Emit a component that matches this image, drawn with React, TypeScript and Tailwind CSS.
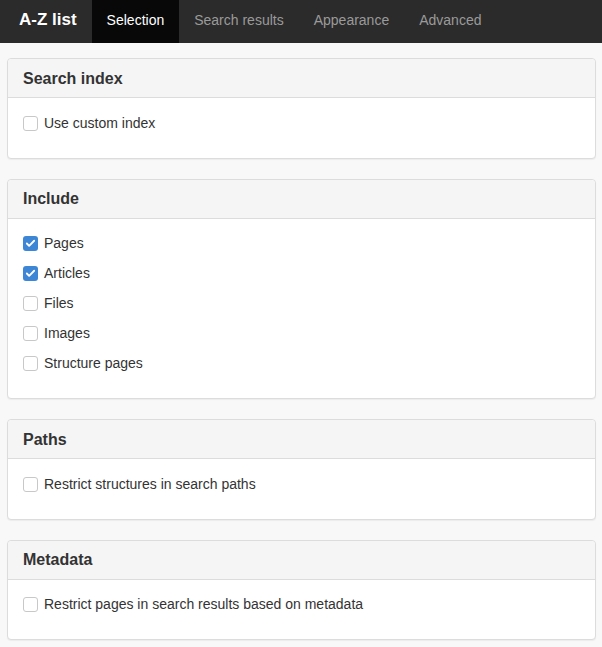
import { Check } from 'lucide-react'

type Option = { label: string; checked?: boolean }

const sections: { title: string; options: Option[] }[] = [
  { title: 'Search index', options: [{ label: 'Use custom index' }] },
  {
    title: 'Include',
    options: [
      { label: 'Pages', checked: true },
      { label: 'Articles', checked: true },
      { label: 'Files' },
      { label: 'Images' },
      { label: 'Structure pages' },
    ],
  },
  { title: 'Paths', options: [{ label: 'Restrict structures in search paths' }] },
  { title: 'Metadata', options: [{ label: 'Restrict pages in search results based on metadata' }] },
]

const tabs = ['Selection', 'Search results', 'Appearance', 'Advanced']

function CheckBox({ checked }: { checked?: boolean }) {
  if (checked) {
    return (
      <span className="flex items-center justify-center w-[15px] h-[15px] rounded-[3px] bg-[#3d86d6]">
        <Check size={11} strokeWidth={4} className="text-white" />
      </span>
    )
  }
  return <span className="w-[15px] h-[15px] rounded-[3px] border border-[#c8c8c8] bg-white" />
}

function Panel({ title, options }: { title: string; options: Option[] }) {
  return (
    <section className="border border-[#dcdcdc] rounded-[4px] bg-white shadow-[0_1px_1px_rgba(0,0,0,0.05)]">
      <header className="h-[39px] flex items-center px-[15px] pt-[1px] bg-[#f5f5f5] border-b border-[#dcdcdc] rounded-t-[4px]">
        <h2 className="text-[16px] font-bold text-[#333]">{title}</h2>
      </header>
      <div className="px-[15px] pt-[15px] pb-[24.5px] flex flex-col gap-[10px]">
        {options.map((o) => (
          <label key={o.label} className="h-[20px] flex items-center gap-[6px] text-[14px] text-[#333]">
            <CheckBox checked={o.checked} />
            {o.label}
          </label>
        ))}
      </div>
    </section>
  )
}

export default function App() {
  return (
    <div className="min-h-[647px] bg-[#f8f8f8] font-['Liberation_Sans',Arial,sans-serif]">
      <nav className="h-[43px] flex bg-[#2b2b2b]">
        <div className="pl-[19px] pr-[15px] pb-[4px] flex items-center text-[17px] font-bold text-white">A-Z list</div>
        {tabs.map((t, i) => (
          <div
            key={t}
            className={
              i === 0
                ? 'px-[15px] pb-[3px] flex items-center text-[14px] text-white bg-[#080808]'
                : 'px-[15px] pb-[3px] flex items-center text-[14px] text-[#9a9a9a]'
            }
          >
            {t}
          </div>
        ))}
      </nav>
      <main className="pt-[15px] pl-[7px] pr-[6px] flex flex-col gap-[20px]">
        {sections.map((s) => (
          <Panel key={s.title} title={s.title} options={s.options} />
        ))}
      </main>
    </div>
  )
}
